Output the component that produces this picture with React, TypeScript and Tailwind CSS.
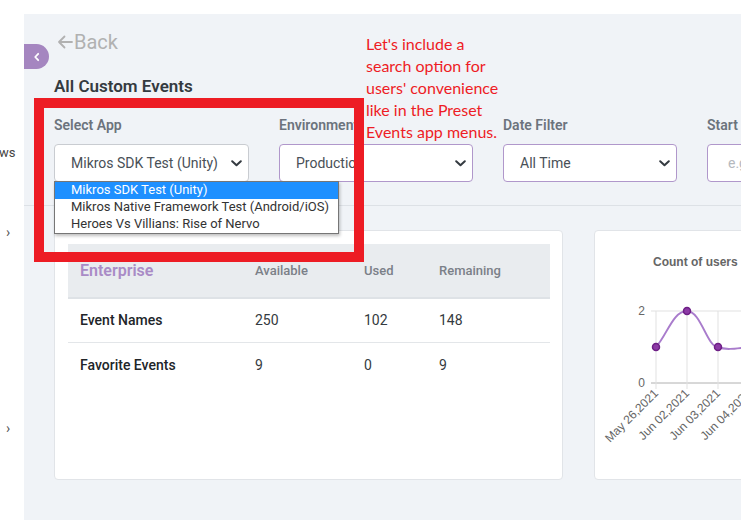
import React from "react";

const Chevron = () => (
  <svg width="11" height="7" viewBox="0 0 11 7" className="shrink-0">
    <path d="M1.2 1.2 L5.5 5.3 L9.8 1.2" fill="none" stroke="#343a40" strokeWidth="2" strokeLinecap="round" strokeLinejoin="round" />
  </svg>
);

function Select({ w, label, value, border }: { w: string; label: string; value: string; border: string }) {
  return (
    <div className={`flex flex-col shrink-0 ${w}`}>
      <div className="text-[14px] font-semibold text-[#6c737d] h-[20px] leading-[20px] mb-[9px] whitespace-nowrap">{label}</div>
      <div className={`h-[38px] bg-white rounded-[4px] border ${border} flex items-center pl-[16px] pr-[6px] justify-between`}>
        <span className="text-[14px] text-[#495057] whitespace-nowrap">{value}</span>
        <Chevron />
      </div>
    </div>
  );
}

export default function App() {
  return (
    <div className="w-[741px] h-[520px] relative overflow-hidden bg-white flex" style={{ fontFamily: "Roboto, 'Noto Sans', sans-serif" }}>
      {/* left sidebar remnant */}
      <div className="w-[24px] shrink-0 relative text-[#333] text-[12px]">
        <div className="absolute left-[-1px] top-[143px] text-[13px] text-[#444]">ws</div>
        <div className="absolute left-[6px] top-[222px] text-[14px] text-[#555]">›</div>
        <div className="absolute left-[6px] top-[418px] text-[14px] text-[#555]">›</div>
      </div>

      {/* main */}
      <div className="flex-1 mt-[14px] bg-[#f0f3f7] relative flex flex-col">
        {/* toggle */}
        <div className="absolute left-0 top-[30px] w-[25px] h-[25px] bg-[#a586c0] rounded-r-full flex items-center justify-center">
          <svg width="10" height="10" viewBox="0 0 10 10">
            <path d="M6.2 1.8 L3.2 5 L6.2 8.2" fill="none" stroke="white" strokeWidth="1.8" strokeLinecap="round" strokeLinejoin="round" />
          </svg>
        </div>

        <div className="pl-[33px] pt-[16px] flex items-center text-[#b1b1b1] h-[24px] box-content">
          <svg width="16" height="14" viewBox="0 0 16 14" className="mr-[1px]">
            <path d="M15 7 H2 M7.5 1.5 L2 7 L7.5 12.5" fill="none" stroke="#b1b1b1" strokeWidth="1.8" strokeLinecap="round" strokeLinejoin="round" />
          </svg>
          <span className="text-[20px] leading-[24px]">Back</span>
        </div>

        <div className="pl-[30px] mt-[22px] text-[17px] font-semibold text-[#343a40] leading-[20px]">All Custom Events</div>

        {/* filters */}
        <div className="mt-[19px] pl-[30px] pb-[23px] border-b border-[#dde1e6] flex gap-[30px] whitespace-nowrap">
          <Select w="w-[195px]" label="Select App" value="Mikros SDK Test (Unity)" border="border-[#c9ccd1]" />
          <Select w="w-[194px]" label="Environment" value="Production" border="border-[#b097cb]" />
          <Select w="w-[174px]" label="Date Filter" value="All Time" border="border-[#b097cb]" />
          <div className="flex flex-col shrink-0 w-[174px]">
            <div className="text-[14px] font-semibold text-[#6c737d] h-[20px] leading-[20px] mb-[9px]">Start Date</div>
            <div className="h-[38px] bg-white rounded-[4px] border border-[#b097cb] flex items-center pl-[20px] text-[14px] text-[#b5b9be]">e.g. 2021-05-26</div>
          </div>
        </div>

        {/* cards */}
        <div className="mt-[24px] pl-[30px] flex gap-[31px]">
          <div className="w-[509px] h-[250px] shrink-0 bg-white border border-[#e1e4e8] rounded-[4px] pt-[13px] pl-[13px] pr-[12px]">
            <div className="grid grid-cols-[175px_109px_75px_1fr] bg-[#e9ecef] h-[53px] items-center border-b-2 border-[#dee2e6] box-content">
              <div className="pl-[12px] text-[16px] font-semibold text-[#a98bc6]">Enterprise</div>
              <div className="pl-[12px] text-[13px] font-medium text-[#7b8088]">Available</div>
              <div className="pl-[12px] text-[13px] font-medium text-[#7b8088]">Used</div>
              <div className="pl-[12px] text-[13px] font-medium text-[#7b8088]">Remaining</div>
            </div>
            <div className="grid grid-cols-[175px_109px_75px_1fr] h-[44px] items-center border-b border-[#e3e6e9] text-[14px] text-[#343a40]">
              <div className="pl-[12px] font-medium text-[#212529]">Event Names</div>
              <div className="pl-[12px]">250</div>
              <div className="pl-[12px]">102</div>
              <div className="pl-[12px]">148</div>
            </div>
            <div className="grid grid-cols-[175px_109px_75px_1fr] h-[45px] items-center text-[14px] text-[#343a40]">
              <div className="pl-[12px] font-medium text-[#212529]">Favorite Events</div>
              <div className="pl-[12px]">9</div>
              <div className="pl-[12px]">0</div>
              <div className="pl-[12px]">9</div>
            </div>
          </div>

          <div className="w-[300px] h-[250px] shrink-0 bg-white border border-[#e1e4e8] rounded-[4px]">
            <svg width="300" height="250" viewBox="0 0 300 250" style={{ fontFamily: "'Liberation Sans', Arial, sans-serif" }}>
              <text x="58" y="35" fontSize="12" fontWeight="bold" fill="#666">Count of users by day</text>
              <line x1="56" y1="80" x2="300" y2="80" stroke="#e1e1e1" />
              <line x1="56" y1="152" x2="300" y2="152" stroke="#b0b0b0" />
              {[61, 92, 123, 154].map((x) => (
                <line key={x} x1={x} y1="80" x2={x} y2="158" stroke="#e1e1e1" />
              ))}
              <text x="50" y="84" fontSize="12" fill="#666" textAnchor="end">2</text>
              <text x="50" y="156" fontSize="12" fill="#666" textAnchor="end">0</text>
              <path d="M61 116 C 72 104, 78 80, 92 80 C 106 80, 112 116, 123 116 C 130 119, 138 118, 154 116" fill="none" stroke="#a97ccc" strokeWidth="2" />
              {[[61, 116], [92, 80], [123, 116], [154, 116]].map(([x, y]) => (
                <circle key={x} cx={x} cy={y} r="3.5" fill="#8c3aa5" stroke="#6e1f86" strokeWidth="1.5" />
              ))}
              {[["May 26,2021", 64], ["Jun 02,2021", 95], ["Jun 03,2021", 126], ["Jun 04,2021", 157]].map(([t, x]) => (
                <text key={t as string} transform={`translate(${x},163) rotate(-45)`} fontSize="12" fill="#666" textAnchor="end">{t}</text>
              ))}
            </svg>
          </div>
        </div>

        {/* dropdown list */}
        <div className="absolute left-[30px] top-[167px] w-[285px] bg-white border border-[#767676] shadow-[1px_2px_3px_rgba(0,0,0,0.25)] text-[13px] leading-[16px] text-[#333] whitespace-nowrap">
          <div className="bg-[#1e90ff] text-white pl-[16px] h-[17px]">Mikros SDK Test (Unity)</div>
          <div className="pl-[16px] h-[17px]">Mikros Native Framework Test (Android/iOS)</div>
          <div className="pl-[16px] h-[17px]">Heroes Vs Villians: Rise of Nervo</div>
        </div>

        {/* red annotation box */}
        <div className="absolute left-[10px] top-[84px] w-[330px] h-[164px] border-[10px] border-[#ed1c24]" />
        <div className="absolute left-[342px] top-[19px] text-[16px] leading-[22px] text-[#ee1c25]" style={{ fontFamily: "Lato, 'Open Sans', sans-serif" }}>
          Let's include a<br />search option for<br />users' convenience<br />like in the Preset<br />Events app menus.
        </div>
      </div>
    </div>
  );
}
